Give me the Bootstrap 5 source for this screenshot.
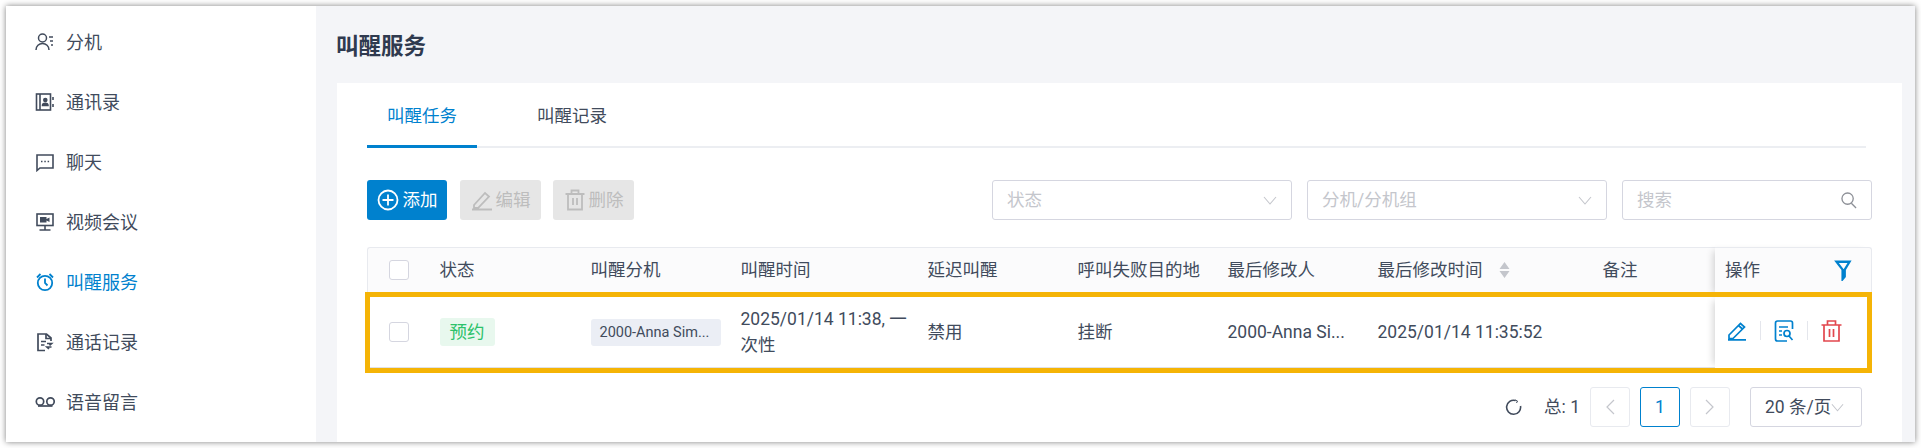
<!DOCTYPE html>
<html lang="zh">
<head>
<meta charset="utf-8">
<title>叫醒服务</title>
<link href="https://cdn.jsdelivr.net/npm/bootstrap@5.3.0/dist/css/bootstrap.min.css" rel="stylesheet">
<style>
html,body{height:100%;}
body{background:#fff;padding:6px;font-family:Roboto,"Noto Sans CJK SC",sans-serif;font-size:17.5px;color:#414b5c;overflow:hidden;}
.win{height:436px;box-shadow:0 0 6px rgba(0,0,0,.5);overflow:hidden;background:#f4f5f8;}
.side{width:310px;flex:none;background:#fff;padding-top:6px;}
.side-link{height:60px;padding:0 0 0 29px;color:#414b5c;gap:11px;font-size:18px;}
.side-link svg{width:20px;height:20px;flex:none;}
.side-link.on{color:#0081ce;}
.main{flex:1;min-width:0;padding:0 13px 0 21px;}
.ttl{height:77px;padding-top:3px;font-size:22.5px;font-weight:700;color:#2f3a4f;margin:0 0 0 -1px;}
.pane{background:#fff;padding:0 30px;height:359px;position:relative;}
.tabs-w{height:65px;border-bottom:2px solid #eceef2;width:1499px;}
.tab-i{width:110px;height:65px;border:0;border-bottom:3px solid transparent;color:#414b5c;margin-right:60px;background:none;border-radius:0;font-size:17.5px;padding:4px 0 0;}
.tab-i+.tab-i{margin-left:-20px;}
.tab-i.on{color:#0081ce;border-bottom-color:#0081ce;}
.bar{margin-top:32px;height:40px;}
.act{height:40px;width:81px;padding:0;border-radius:3px;font-size:17.5px;border:0;gap:3px;}
.act.go{background:#0081ce;color:#fff;width:80px;gap:4px;}
.act.off{background:#e6e6e6;color:#bdbdbd;opacity:1;}
.act svg{width:22px;height:22px;flex:none;}
.act-2{margin-left:13px;}
.act-3{margin-left:12px;}
.fld{height:40px;border:1px solid #d5d6e0;border-radius:3px;padding:0 14px;color:#c4c6cc;background:#fff;font-size:17.5px;}
.fld svg{flex:none;}
.f1{width:300px;margin-left:auto;}
.f2{width:300px;margin-left:15px;}
.f3{width:250px;margin-left:15px;}
.fld input{border:0;outline:0;width:170px;font-size:17.5px;padding:0;color:#414b5c;}
.fld input::placeholder{color:#c4c6cc;}
.tb-w{margin-top:27px;width:1505px;}
.tbl{table-layout:fixed;width:1505px;margin:0;border-collapse:separate;border-spacing:0;font-size:17.5px;}
.tbl>thead>tr>th{height:50px;padding:0 12.5px 5px;background:#fbfbfc;font-weight:400;color:#414b5c;border-top:1px solid #e8eaef;border-bottom:0;vertical-align:middle;white-space:nowrap;}
.tbl>thead>tr>th:first-child{border-left:1px solid #e8eaef;padding-left:21px;border-top-left-radius:3px;}
.tbl>thead>tr>th:last-child{border-right:1px solid #e8eaef;border-top-right-radius:3px;}
.tbl>tbody>tr>td{height:71px;padding:0 12.5px;color:#414b5c;border-bottom:1px solid #dfe1e6;vertical-align:middle;line-height:26px;}
.tbl>tbody>tr>td:first-child{padding-left:22px;}
.tbl>tbody>tr>td.tm{padding-right:4px;}
.tbl>thead>tr>th.fx{box-shadow:-6px 0 7px -4px rgba(0,0,0,.16);padding-left:10px;}
.tbl>tbody>tr>td.fx{box-shadow:-6px 0 7px -4px rgba(0,0,0,.16);padding-left:12px;border-bottom-color:#fff;}
.cb{display:block;width:20px;height:20px;border:1px solid #d5d6e0;border-radius:3px;background:#fff;}
.tag-ok{display:inline-block;height:28px;line-height:28px;padding:0 10px;background:#e8f8ee;color:#2dc26b;border-radius:3px;}
.tag-ext{display:block;height:27px;line-height:27px;width:130px;padding:0 9px;background:#ebeef5;border-radius:3px;font-size:14.5px;white-space:nowrap;}
.sep{width:1px;height:19px;background:#e4e6ec;flex:none;}
.acts{gap:13px;margin-top:-3px;}
.acts svg{flex:none;}
.pg{margin-top:19px;height:40px;padding-right:10px;}
.pg-c{width:40px;height:40px;border:1px solid #e8eaef;border-radius:3px;background:#fff;}
.pg-c.cur{border-color:#0081ce;color:#0081ce;}
.pg-sel{width:112px;height:40px;border:1px solid #d5d6e0;border-radius:3px;padding-left:14px;}
.mark-box{position:absolute;left:28px;top:209px;width:1507px;height:81px;border:5px solid #f5b406;pointer-events:none;}
</style>
</head>
<body>
<div class="win d-flex">
  <nav class="side nav flex-column">
    <a class="side-link nav-link d-flex align-items-center" href="#"><svg viewBox="0 0 20 20" fill="none" stroke="currentColor" stroke-width="1.5"><circle cx="7.5" cy="6" r="4"/><path d="M1 18c0-4 3-6.500 6.500-6.500s6.500 2.500 6.500 6.500"/><path d="M14 5h4M15 9h3M16 13h2"/></svg>分机</a>
    <a class="side-link nav-link d-flex align-items-center" href="#"><svg viewBox="0 0 20 20" fill="none" stroke="currentColor" stroke-width="1.6"><rect x="1.500" y="2" width="14" height="16"/><path d="M5 2v16"/><circle cx="10.300" cy="8" r="1.500" fill="currentColor"/><path d="M7.500 13.500c0-3 5.500-3 5.500 0z" fill="currentColor"/><path d="M18 5v3M18 12v3"/></svg>通讯录</a>
    <a class="side-link nav-link d-flex align-items-center" href="#"><svg viewBox="0 0 20 20" fill="none" stroke="currentColor" stroke-width="1.6"><path d="M2 3h16v13H5l-3 2.500z"/><path d="M6 9.500h1.500M9.300 9.500h1.500M12.600 9.500h1.500"/></svg>聊天</a>
    <a class="side-link nav-link d-flex align-items-center" href="#"><svg viewBox="0 0 20 20" fill="none" stroke="currentColor" stroke-width="1.6"><rect x="2" y="2" width="16" height="11.500"/><path d="M5 5h6.500v5.500H5zM11.500 7l3-1.500v4.500l-3-1.500z" fill="currentColor" stroke="none"/><path d="M10 13.500v4M4.500 18h11"/></svg>视频会议</a>
    <a class="side-link nav-link on d-flex align-items-center" href="#"><svg viewBox="0 0 20 20" fill="none" stroke="currentColor" stroke-width="1.800"><circle cx="10" cy="11" r="7.200"/><path d="M10 6.500V11l2.500 2.500"/><path d="M2 5.500 5.500 2M18 5.500 14.500 2"/></svg>叫醒服务</a>
    <a class="side-link nav-link d-flex align-items-center" href="#"><svg viewBox="0 0 20 20" fill="none" stroke="currentColor" stroke-width="1.700"><path d="M10 18.500H3V2h8.500L16 6v3"/><path d="M11 2v4.500h5"/><path d="M6 9.500h5M6 13h3.500"/><path d="M12 11.500h4.500l-2 1.800M16.500 15H12l2 1.800"/></svg>通话记录</a>
    <a class="side-link nav-link d-flex align-items-center" href="#"><svg viewBox="0 0 20 20" fill="none" stroke="currentColor" stroke-width="1.700"><circle cx="5" cy="9.500" r="3.700"/><circle cx="15.500" cy="9.500" r="3.700"/><path d="M3 14h14.500"/></svg>语音留言</a>
  </nav>
  <main class="main">
    <h1 class="ttl d-flex align-items-center">叫醒服务</h1>
    <section class="pane">
      <div class="tabs-w d-flex">
        <button class="tab-i on" type="button">叫醒任务</button>
        <button class="tab-i" type="button">叫醒记录</button>
      </div>
      <div class="bar d-flex align-items-center">
        <button class="btn act go d-flex align-items-center justify-content-center" type="button"><svg viewBox="0 0 22 22" fill="none" stroke="#fff" stroke-width="1.800"><circle cx="11" cy="11" r="9.500"/><path d="M11 5.500v11M5.500 11h11"/></svg>添加</button>
        <button class="btn act off act-2 d-flex align-items-center justify-content-center" type="button" disabled><svg viewBox="0 0 22 22" fill="none" stroke="#bdbdbd" stroke-width="1.800"><path d="M3 16 14 4l4 3.500L7 19H3zM1 20.500h20"/></svg>编辑</button>
        <button class="btn act off act-3 d-flex align-items-center justify-content-center" type="button" disabled><svg viewBox="0 0 22 22" fill="none" stroke="#bdbdbd" stroke-width="1.800"><path d="M1.500 5h19M7.500 5V1.500h7V5M4 5v15.500h14V5M9 9v7M13 9v7"/></svg>删除</button>
        <div class="fld f1 d-flex align-items-center justify-content-between">状态<svg width="14" height="9" viewBox="0 0 14 9" fill="none" stroke="#c4c6cc" stroke-width="1.100"><path d="M1 1l6 7 6-7"/></svg></div>
        <div class="fld f2 d-flex align-items-center justify-content-between">分机/分机组<svg width="14" height="9" viewBox="0 0 14 9" fill="none" stroke="#c4c6cc" stroke-width="1.100"><path d="M1 1l6 7 6-7"/></svg></div>
        <div class="fld f3 d-flex align-items-center justify-content-between"><input type="text" placeholder="搜索" aria-label="搜索"><svg width="16" height="17" viewBox="0 0 17 18" fill="none" stroke="#8c8f96" stroke-width="1.400"><circle cx="7" cy="7" r="6"/><path d="M11 12l5 5"/></svg></div>
      </div>
      <div class="tb-w">
        <table class="table tbl">
          <colgroup><col style="width:60px"><col style="width:151px"><col style="width:150px"><col style="width:187px"><col style="width:150px"><col style="width:150px"><col style="width:150px"><col style="width:225px"><col style="width:125px"><col style="width:157px"></colgroup>
          <thead><tr>
            <th><span class="cb"></span></th>
            <th>状态</th><th>叫醒分机</th><th>叫醒时间</th><th>延迟叫醒</th><th>呼叫失败目的地</th><th>最后修改人</th>
            <th><span class="d-flex align-items-center gap-3">最后修改时间<svg width="11" height="20" viewBox="0 0 11 20" fill="#c4c6cc"><path d="M5.500 2l5 7H.5zM5.500 18l5-7H.5z"/></svg></span></th>
            <th>备注</th>
            <th class="fx"><span class="d-flex align-items-center justify-content-between" style="padding-right:7px">操作<svg width="18" height="21" viewBox="0 0 18 24" fill="none" stroke="#0081ce" stroke-width="2.600"><path d="M1.500 2h15L11 11v8l-2.500 3V11z"/></svg></span></th>
          </tr></thead>
          <tbody><tr>
            <td><span class="cb"></span></td>
            <td><span class="tag-ok">预约</span></td>
            <td><span class="tag-ext">2000-Anna Sim...</span></td>
            <td class="tm">2025/01/14 11:38, 一次性</td>
            <td>禁用</td>
            <td>挂断</td>
            <td>2000-Anna Si...</td>
            <td>2025/01/14 11:35:52</td>
            <td></td>
            <td class="fx"><div class="acts d-flex align-items-center">
              <svg width="20" height="20" viewBox="0 0 20 20" fill="none" stroke="#0081ce" stroke-width="1.700"><path d="M2 14 13.500 2.500l4 3.500L6 17.500H2zM11.500 4.500l4 3.500M1 18.800h18"/></svg>
              <span class="sep"></span>
              <svg width="20" height="22" viewBox="0 0 20 22" fill="none" stroke="#0081ce" stroke-width="1.700"><path d="M18.500 9V3a2 2 0 0 0-2-2h-13a2 2 0 0 0-2 2v16a2 2 0 0 0 2 2H13"/><path d="M5 7h9M5 11h3M5 15h3"/><circle cx="13" cy="13.500" r="3"/><path d="M15 16l3.500 4"/></svg>
              <span class="sep"></span>
              <svg width="21" height="22" viewBox="0 0 21 22" fill="none" stroke="#e2474e" stroke-width="1.700"><path d="M.5 5h20M6.500 5V1h8v4M3 5v16h15V5M8.500 9v8M12.500 9v8"/></svg>
            </div></td>
          </tr></tbody>
        </table>
      </div>
      <div class="pg d-flex align-items-center justify-content-end">
        <svg width="17" height="17" viewBox="0 0 17 17" fill="none" stroke="#414b5c" stroke-width="1.600"><path d="M10.500 1.500a7 7 0 1 0 5 5.500"/><path d="M10 1l2.500 1-1 2" stroke-width="1"/></svg>
        <span style="margin-left:22px;margin-right:10px">总: 1</span>
        <div class="pg-c d-flex align-items-center justify-content-center"><svg width="10" height="16" viewBox="0 0 10 16" fill="none" stroke="#c4c6cc" stroke-width="1.200"><path d="M9 1 2 8l7 7"/></svg></div>
        <div class="pg-c cur d-flex align-items-center justify-content-center" style="margin-left:10px">1</div>
        <div class="pg-c d-flex align-items-center justify-content-center" style="margin-left:10px"><svg width="10" height="16" viewBox="0 0 10 16" fill="none" stroke="#c4c6cc" stroke-width="1.200"><path d="m1 1 7 7-7 7"/></svg></div>
        <div class="pg-sel d-flex align-items-center" style="margin-left:20px">20 条/页<svg width="13" height="9" viewBox="0 0 14 9" fill="none" stroke="#c4c6cc" stroke-width="1.100"><path d="M1 1l6 7 6-7"/></svg></div>
      </div>
      <div class="mark-box"></div>
    </section>
  </main>
</div>
<script src="https://cdn.jsdelivr.net/npm/bootstrap@5.3.0/dist/js/bootstrap.bundle.min.js"></script>
</body>
</html>
